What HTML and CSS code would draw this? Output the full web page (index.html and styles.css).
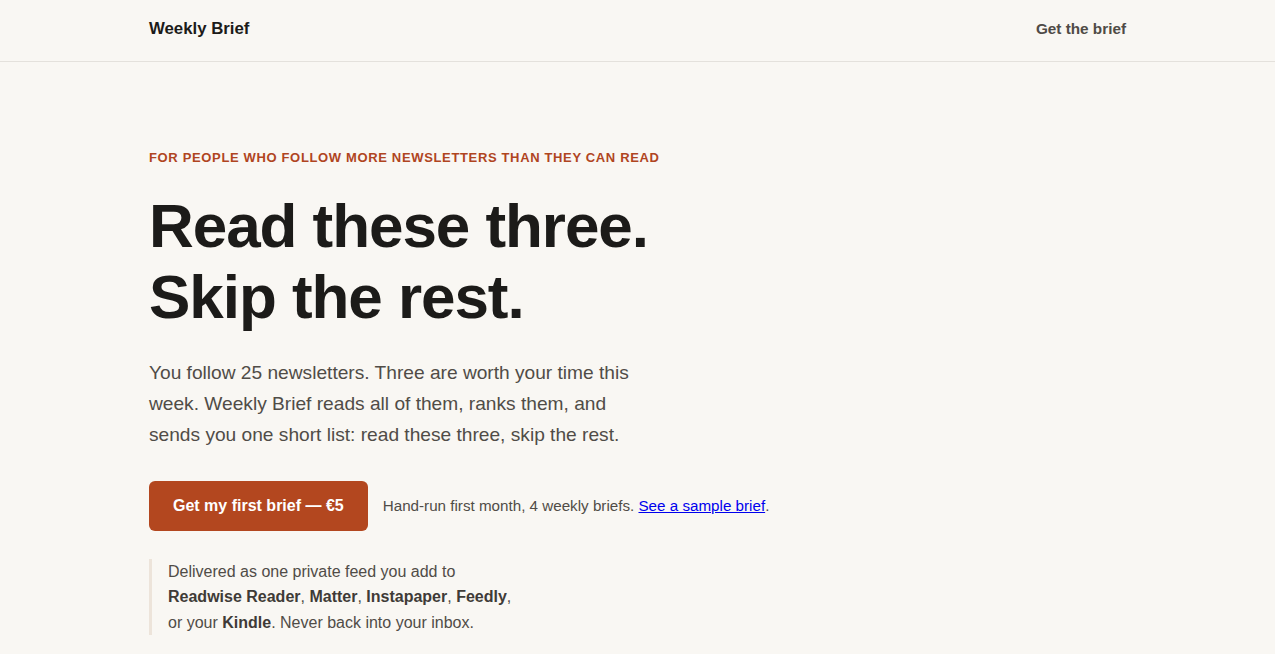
FILE: index.html
```html
<!DOCTYPE html>
<html lang="en">
<head>
    <meta charset="UTF-8">
    <meta name="viewport" content="width=device-width, initial-scale=1.0">
    <title>Weekly Brief</title>
    <link rel="stylesheet" href="styles.css">
</head>
<body>
    <header class="site-header">
        <div class="wrap header-row">
            <a class="logo" href="#">Weekly Brief</a>
            <a class="header-link" href="#get">Get the brief</a>
        </div>
    </header>
    <main class="wrap hero">
        <p class="eyebrow">For people who follow more newsletters than they can read</p>
        <h1>Read these three.<br>Skip the rest.</h1>
        <p class="lede">You follow 25 newsletters. Three are worth your time this week. Weekly Brief reads all of them, ranks them, and sends you one short list: read these three, skip the rest.</p>
        <div class="cta-row" id="get">
            <a class="btn" href="#">Get my first brief — €5</a>
            <p class="cta-note">Hand-run first month, 4 weekly briefs. <a href="#sample">See a sample brief</a>.</p>
        </div>
        <p class="delivery">Delivered as one private feed you add to<br><strong>Readwise Reader</strong>, <strong>Matter</strong>, <strong>Instapaper</strong>, <strong>Feedly</strong>,<br>or your <strong>Kindle</strong>. Never back into your inbox.</p>
    </main>
</body>
</html>
```

FILE: styles.css
```css
body {
    margin: 0;
    font-family: "Liberation Sans", Arial, sans-serif;
    background-color: #f9f7f3;
    color: #1c1b19;
}
.wrap {
    max-width: 977px;
    margin: 0 auto;
}
.site-header {
    border-bottom: 1px solid #e4e1dc;
}
.header-row {
    display: flex;
    justify-content: space-between;
    align-items: center;
    height: 61px;
    box-sizing: border-box;
    padding-bottom: 4px;
}
.logo {
    font-size: 16.8px;
    font-weight: bold;
    color: #1c1b19;
    text-decoration: none;
}
.header-link {
    font-size: 15.3px;
    font-weight: bold;
    color: #4f4b46;
    text-decoration: none;
}
.hero {
    padding: 88px 0 40px;
}
.eyebrow {
    margin: 0 0 25px;
    font-size: 13px;
    font-weight: bold;
    text-transform: uppercase;
    letter-spacing: 0.05em;
    color: #b0451f;
}
h1 {
    margin: 0 0 24px;
    font-size: 62px;
    line-height: 1.15;
    letter-spacing: -0.017em;
    color: #1c1b19;
}
.lede {
    max-width: 490px;
    margin: 0 0 31px;
    font-size: 19.15px;
    line-height: 31px;
    color: #504c47;
}
.cta-row {
    display: flex;
    align-items: center;
    gap: 15px;
    margin-bottom: 28px;
}
.btn {
    display: inline-block;
    padding: 16px 24px;
    border-radius: 6px;
    background-color: #b3471f;
    color: #fff;
    font-size: 16px;
    font-weight: bold;
    text-decoration: none;
}
.cta-note {
    margin: 0;
    font-size: 15.2px;
    color: #504c47;
}
.cta-note a {
    color: #0000ee;
}
.delivery {
    margin: 0;
    padding-left: 16px;
    border-left: 3px solid #ede4da;
    font-size: 16px;
    line-height: 25.6px;
    color: #504c47;
}
.delivery strong {
    color: #3f3b37;
}
```
